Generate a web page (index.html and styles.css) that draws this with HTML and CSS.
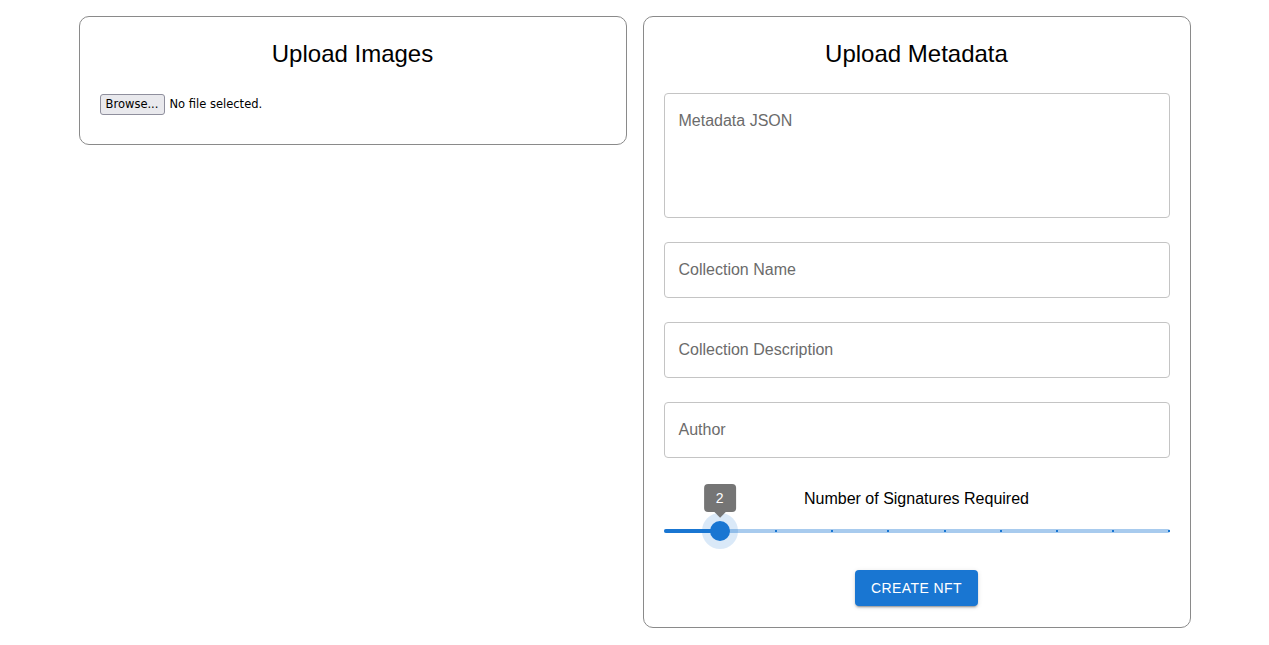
FILE: index.html
```html
<!DOCTYPE html>
<html>
<head>
<meta charset="utf-8">
<link rel="stylesheet" href="styles.css">
</head>
<body>
<div class="page">
  <section class="card card-images">
    <h2 class="card-title">Upload Images</h2>
    <div class="file-row">
      <span class="file-btn">Browse...</span>
      <span class="file-text">No file selected.</span>
    </div>
  </section>
  <section class="card card-meta">
    <h2 class="card-title">Upload Metadata</h2>
    <div class="field field-multi"><span class="placeholder">Metadata JSON</span></div>
    <div class="field"><span class="placeholder">Collection Name</span></div>
    <div class="field"><span class="placeholder">Collection Description</span></div>
    <div class="field"><span class="placeholder">Author</span></div>
    <div class="slider-label">Number of Signatures Required</div>
    <div class="slider">
      <div class="rail"></div>
      <div class="track" style="width: 11.11%"></div>
      <span class="mark" style="left: 11.11%"></span>
      <span class="mark" style="left: 22.22%"></span>
      <span class="mark" style="left: 33.33%"></span>
      <span class="mark" style="left: 44.44%"></span>
      <span class="mark" style="left: 55.55%"></span>
      <span class="mark" style="left: 66.66%"></span>
      <span class="mark" style="left: 77.77%"></span>
      <span class="mark" style="left: 88.88%"></span>
      <span class="mark" style="left: calc(100% - 1px)"></span>
      <div class="thumb" style="left: 11.11%">
        <div class="value-label">2</div>
      </div>
    </div>
    <div class="actions">
      <button class="btn-primary">CREATE NFT</button>
    </div>
  </section>
</div>
</body>
</html>
```

FILE: styles.css
```css
* { box-sizing: border-box; }
body {
  margin: 0;
  background: #fff;
  font-family: "Liberation Sans", Arial, sans-serif;
  color: #000;
}
.page {
  display: flex;
  justify-content: center;
  align-items: flex-start;
  gap: 16px;
  padding-top: 16px;
}
.card {
  width: 548px;
  border: 1px solid #8a8a8a;
  border-radius: 10px;
  padding: 20px;
  display: flex;
  flex-direction: column;
}
.card-meta { padding-bottom: 21px; }
.card-title {
  margin: 1px 0 23px;
  font-size: 24px;
  font-weight: 400;
  line-height: 32px;
  text-align: center;
}
.file-row {
  display: flex;
  align-items: center;
  height: 22px;
  margin-bottom: 9px;
  font-family: "DejaVu Sans", Verdana, sans-serif;
  font-size: 11.5px;
}
.file-btn {
  display: inline-flex;
  align-items: center;
  justify-content: center;
  width: 65px;
  height: 21px;
  background: #e9e9ed;
  border: 1px solid #8f8f9d;
  border-radius: 3px;
  color: #000;
  margin-right: 5px;
}
.field {
  height: 56px;
  border: 1px solid #c4c4c4;
  border-radius: 4px;
  padding: 0 14px 1px;
  display: flex;
  align-items: center;
  margin-bottom: 24px;
}
.field-multi {
  height: 125px;
  align-items: flex-start;
  padding-top: 15px;
}
.placeholder {
  font-size: 16px;
  line-height: 23px;
  color: #6b6b6b;
}
.slider-label {
  text-align: center;
  font-size: 16px;
  line-height: 24px;
  margin-top: 5px;
}
.slider {
  position: relative;
  height: 30px;
  margin-top: 5px;
}
.rail {
  position: absolute;
  left: 0; right: 0;
  top: 13px;
  height: 4px;
  border-radius: 2px;
  background: #1976d2;
  opacity: 0.38;
}
.track {
  position: absolute;
  left: 0;
  top: 13px;
  height: 4px;
  border-radius: 2px;
  background: #1976d2;
}
.mark {
  position: absolute;
  top: 14px;
  width: 2px;
  height: 2px;
  margin-left: -1px;
  background: #1976d2;
}
.thumb {
  position: absolute;
  top: 5px;
  width: 20px;
  height: 20px;
  margin-left: -10px;
  border-radius: 50%;
  background: #1976d2;
  box-shadow: 0 0 0 8px rgba(25, 118, 210, 0.16);
}
.value-label {
  position: absolute;
  bottom: 29px;
  left: 50%;
  transform: translateX(-50%);
  background: #757575;
  color: #fff;
  font-size: 14px;
  line-height: 20px;
  padding: 4px 12px;
  border-radius: 4px;
}
.value-label::after {
  content: "";
  position: absolute;
  left: 50%;
  bottom: -4px;
  width: 8px;
  height: 8px;
  margin-left: -4px;
  background: #757575;
  transform: rotate(45deg);
}
.actions {
  display: flex;
  justify-content: center;
  margin-top: 24px;
}
.btn-primary {
  height: 36px;
  padding: 6px 16px;
  border: none;
  border-radius: 4px;
  background: #1976d2;
  color: #fff;
  font-family: "Liberation Sans", Arial, sans-serif;
  font-size: 14px;
  letter-spacing: 0.4px;
  box-shadow: 0 3px 1px -2px rgba(0,0,0,0.2), 0 2px 2px 0 rgba(0,0,0,0.14), 0 1px 5px 0 rgba(0,0,0,0.12);
}
```
